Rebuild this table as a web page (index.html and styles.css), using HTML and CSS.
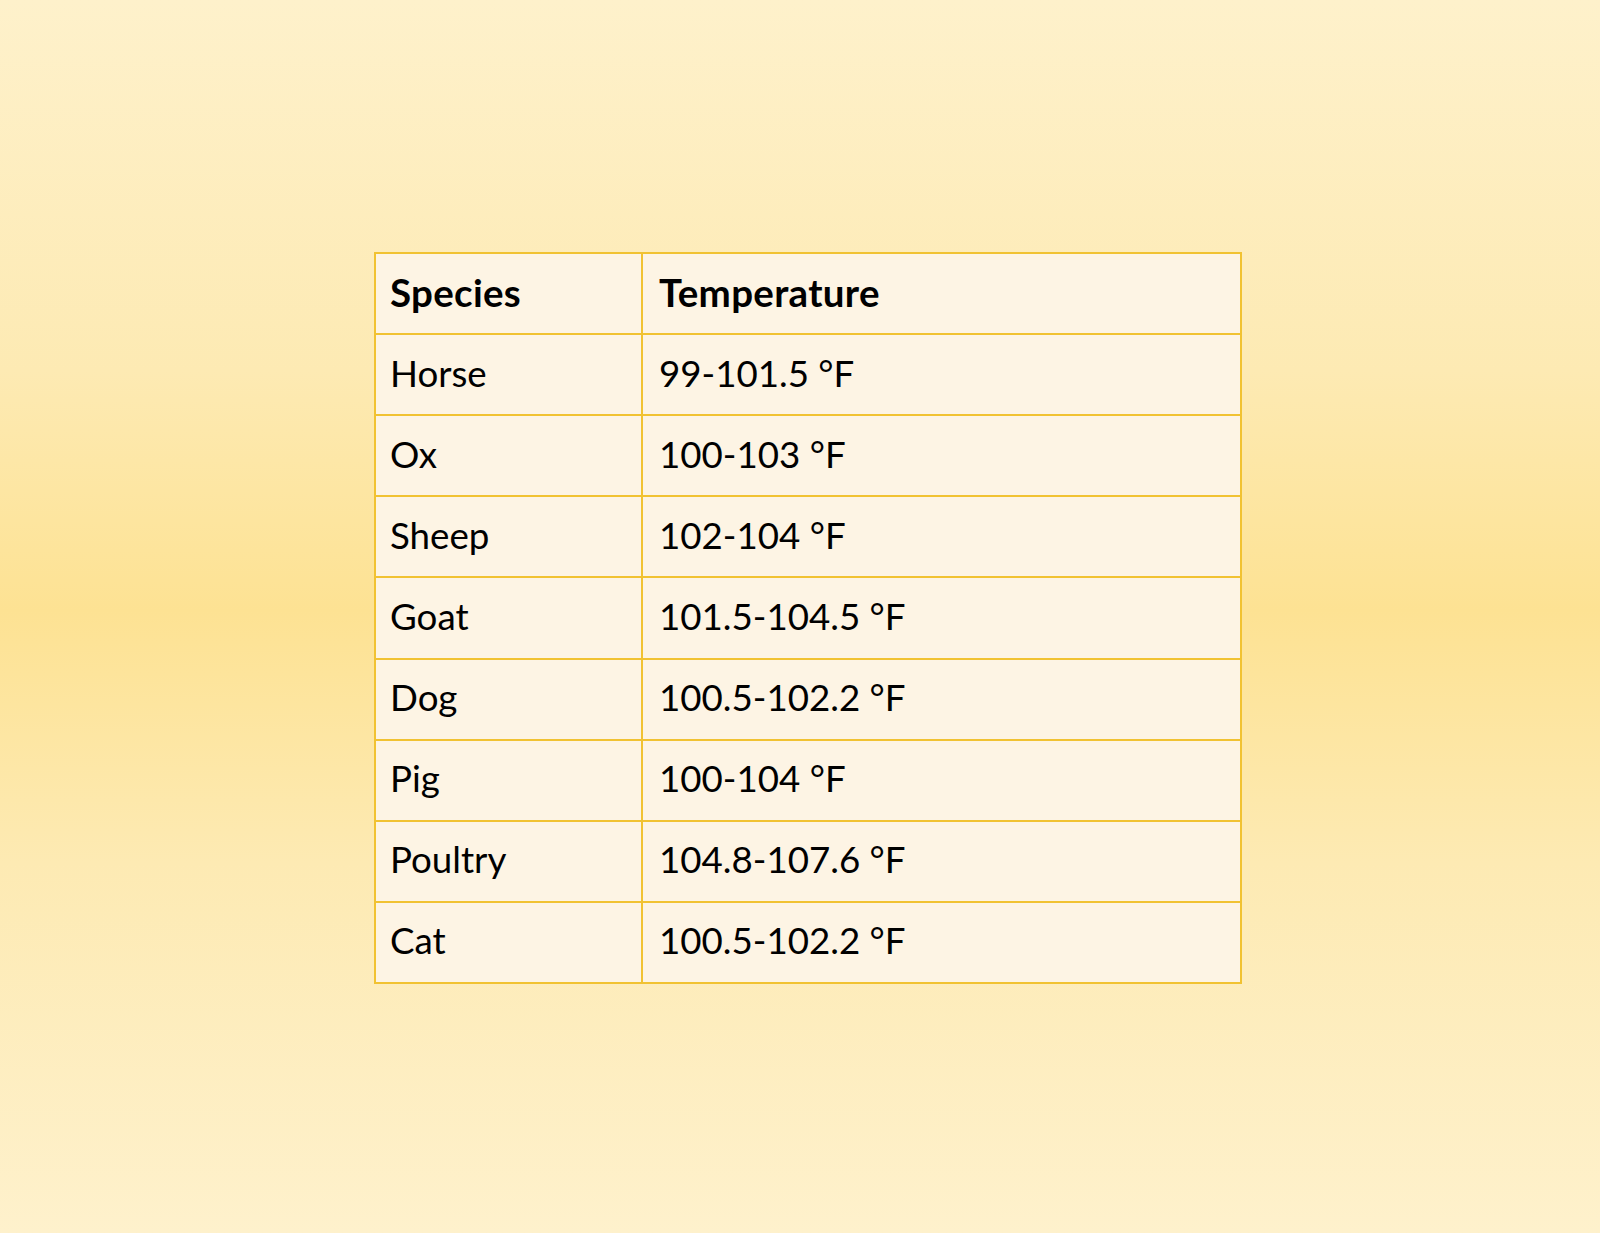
FILE: index.html
```html
<!DOCTYPE html>
<html>
<head>
<meta charset="utf-8">
<link rel="stylesheet" href="styles.css">
</head>
<body>
<div class="page">
  <div class="table">
    <div class="cell head">Species</div><div class="cell val head">Temperature</div>
    <div class="cell">Horse</div><div class="cell val">99-101.5 °F</div>
    <div class="cell">Ox</div><div class="cell val">100-103 °F</div>
    <div class="cell">Sheep</div><div class="cell val">102-104 °F</div>
    <div class="cell">Goat</div><div class="cell val">101.5-104.5 °F</div>
    <div class="cell">Dog</div><div class="cell val">100.5-102.2 °F</div>
    <div class="cell">Pig</div><div class="cell val">100-104 °F</div>
    <div class="cell">Poultry</div><div class="cell val">104.8-107.6 °F</div>
    <div class="cell">Cat</div><div class="cell val">100.5-102.2 °F</div>
  </div>
</div>
</body>
</html>
```
FILE: styles.css
```css
html, body {
  margin: 0;
  padding: 0;
}
.page {
  width: 1600px;
  height: 1233px;
  box-sizing: border-box;
  padding: 252px 0 0 374px;
  background: linear-gradient(to bottom, #fef1cb 0%, #fdeab3 30%, #fde293 49.5%, #fdeab3 70%, #fef1cc 100%);
}
.table {
  display: grid;
  width: 868px;
  box-sizing: border-box;
  grid-template-columns: 265px 597px;
  grid-template-rows: repeat(9, 79.11px);
  gap: 2px;
  padding: 2px;
  background: #f1c232;
}
.cell {
  background: #fdf4e4;
  display: flex;
  align-items: center;
  padding-left: 14px;
  padding-bottom: 4px;
  box-sizing: border-box;
  font-family: Lato, "Open Sans", sans-serif;
  font-size: 36.7px;
  color: #000;
}
.val {
  padding-left: 16px;
}
.head {
  font-weight: bold;
  font-size: 38.5px;
  letter-spacing: 0.3px;
}
```
